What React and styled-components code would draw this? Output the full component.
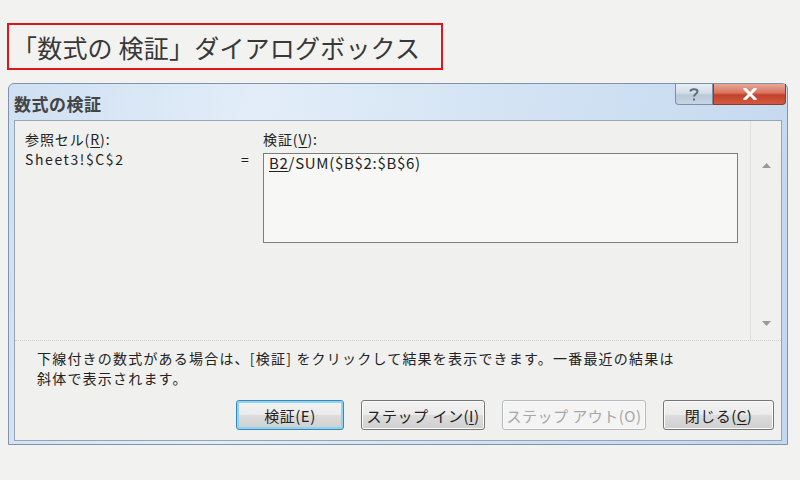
import styled, { createGlobalStyle } from 'styled-components';

const GlobalStyle = createGlobalStyle`
  html, body {
    margin: 0;
    padding: 0;
    background: #f2f2f0;
  }
  body {
    font-family: 'Noto Sans CJK JP', 'Noto Sans', sans-serif;
  }
`;

const Page = styled.div`
  width: 800px;
  height: 480px;
  padding: 23px 0 0 7px;
  box-sizing: border-box;
  overflow: hidden;
`;

const Heading = styled.h1`
  margin: 0;
  width: 436px;
  height: 47px;
  box-sizing: border-box;
  border: 2px solid #e3151c;
  padding-left: 3px;
  display: flex;
  align-items: center;
  font-size: 25px;
  font-weight: 400;
  color: #383838;
  letter-spacing: 0.2px;
`;

const Dialog = styled.div`
  margin: 13px 0 0 1px;
  width: 780px;
  height: 362px;
  box-sizing: border-box;
  border: 1px solid #7f93aa;
  border-radius: 6px 6px 0 0;
  padding: 0 5px 3px 5px;
  display: flex;
  flex-direction: column;
  background: linear-gradient(100deg, #cfe0f3 0%, #e2edf8 30%, #d3e3f4 60%, #c3d7ee 100%);
`;

const TitleBar = styled.div`
  height: 36px;
  flex: none;
  display: flex;
  justify-content: space-between;
  align-items: flex-start;
`;

const Title = styled.span`
  margin-top: 7px;
  font-size: 17px;
  font-weight: 700;
  color: #444;
  letter-spacing: 0.5px;
`;

const Controls = styled.div`
  display: flex;
  margin-right: -4px;
`;

const CaptionButton = styled.div`
  height: 21px;
  width: ${(p) => p.$w}px;
  box-sizing: border-box;
  display: flex;
  align-items: center;
  justify-content: center;
  border: 1px solid ${(p) => (p.$close ? '#8e3b2c' : '#7f8fa3')};
  border-top: none;
  border-radius: ${(p) => (p.$close ? '0 0 4px 0' : '0 0 0 4px')};
  background: ${(p) =>
    p.$close
      ? 'linear-gradient(#e9a896 0%, #d8735e 45%, #c2402a 55%, #d25a40 100%)'
      : 'linear-gradient(#e8eef5 0%, #d2dde9 45%, #b9c8d8 55%, #c8d6e4 100%)'};
  color: #fff;
`;

const Panel = styled.div`
  flex: 1;
  display: flex;
  flex-direction: column;
  background: #f0f0ef;
  border: 1px solid #98a4b2;
`;

const TopSection = styled.div`
  height: 219px;
  flex: none;
  display: flex;
  border-bottom: 1px dotted #cfcfcf;
`;

const Fields = styled.div`
  flex: 1;
  padding: 10px 0 0 10px;
  display: grid;
  grid-template-columns: 216px 22px 475px;
  grid-template-rows: 22px 90px;
  align-items: start;
  font-size: 14px;
  color: #222;
`;

const Label = styled.span`
  letter-spacing: 0.9px;
  line-height: 16px;
`;

const Value = styled.span`
  margin-top: -1px;
  letter-spacing: ${(p) => p.$spacing || 0.6}px;
  line-height: 14px;
`;

const Formula = styled.div`
  height: 90px;
  box-sizing: border-box;
  border: 1px solid #7d7d7d;
  background: #f7f7f6;
  padding: 0 5px;
  font-size: 15px;
  line-height: 17px;
  letter-spacing: 0.7px;
`;

const U = styled.span`
  text-decoration: underline;
  text-underline-offset: 2px;
`;

const ScrollColumn = styled.div`
  width: 31px;
  flex: none;
  border-left: 1px solid #dedede;
  display: flex;
  flex-direction: column;
  align-items: center;
  justify-content: space-between;
  padding: 42px 0 14px;
  box-sizing: border-box;
`;

const Description = styled.p`
  margin: 0;
  padding: 7px 0 0 22px;
  font-size: 14px;
  line-height: 20px;
  letter-spacing: 1.2px;
  color: #222;
`;

const ButtonRow = styled.div`
  margin-top: auto;
  padding: 0 7px 10px 0;
  display: flex;
  justify-content: flex-end;
  gap: 17px;
`;

const Button = styled.button`
  width: ${(p) => p.$w}px;
  height: 30px;
  box-sizing: border-box;
  font-family: inherit;
  font-size: 15px;
  letter-spacing: 0.5px;
  padding: 0;
  border-radius: 3px;
  border: 1px solid ${(p) => (p.$focused ? '#3c87b8' : p.disabled ? '#b6babd' : '#767676')};
  color: ${(p) => (p.disabled ? '#a6a6a6' : '#222')};
  background: ${(p) =>
    p.disabled
      ? '#f4f4f4'
      : 'linear-gradient(#f3f3f3 0%, #ebebeb 48%, #dcdcdc 52%, #d0d0d0 100%)'};
  box-shadow: ${(p) => (p.$focused ? 'inset 0 0 0 2px #8fd3f2' : 'inset 0 0 0 1px #fbfbfb')};
`;

const Arrow = ({ up }) => (
  <svg width="9" height="5" viewBox="0 0 9 5">
    <path d={up ? 'M0 5 L4.5 0 L9 5 Z' : 'M0 0 L4.5 5 L9 0 Z'} fill="#9a9a9a" />
  </svg>
);

const App = () => (
  <Page>
    <GlobalStyle />
    <Heading>「数式の 検証」ダイアログボックス</Heading>
    <Dialog>
      <TitleBar>
        <Title>数式の検証</Title>
        <Controls>
          <CaptionButton $w={38}>
            <svg width="10" height="13" viewBox="0 0 10 13">
              <path d="M1.5 3.5 C1.5 0.5 8.5 0.5 8.5 3.5 C8.5 6 5 6 5 8.5" fill="none" stroke="#5d6c7e" strokeWidth="2" />
              <rect x="4" y="10.5" width="2" height="2" fill="#5d6c7e" />
            </svg>
          </CaptionButton>
          <CaptionButton $w={73} $close>
            <svg width="14" height="12" viewBox="0 0 14 12">
              <path d="M2 1 L12 11 M12 1 L2 11" stroke="#fff" strokeWidth="3" strokeLinecap="square" />
            </svg>
          </CaptionButton>
        </Controls>
      </TitleBar>
      <Panel>
        <TopSection>
          <Fields>
            <Label>参照セル(<U>R</U>):</Label>
            <span />
            <Label>検証(<U>V</U>):</Label>
            <Value $spacing={1.6}>Sheet3!$C$2</Value>
            <Value>=</Value>
            <Formula>
              <U>B2</U>/SUM($B$2:$B$6)
            </Formula>
          </Fields>
          <ScrollColumn>
            <Arrow up />
            <Arrow />
          </ScrollColumn>
        </TopSection>
        <Description>
          下線付きの数式がある場合は、[検証] をクリックして結果を表示できます。一番最近の結果は
          <br />
          斜体で表示されます。
        </Description>
        <ButtonRow>
          <Button $w={108} $focused>検証(E)</Button>
          <Button $w={124}>ステップ イン(<U>I</U>)</Button>
          <Button $w={144} disabled>ステップ アウト(O)</Button>
          <Button $w={111}>閉じる(<U>C</U>)</Button>
        </ButtonRow>
      </Panel>
    </Dialog>
  </Page>
);

export default App;
